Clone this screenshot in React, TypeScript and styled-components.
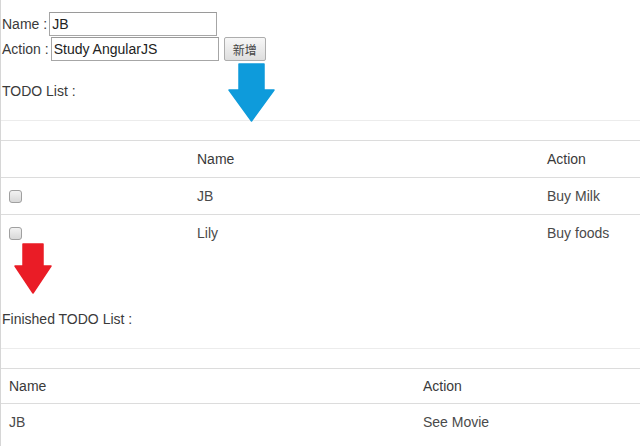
import React from "react";
import styled, { createGlobalStyle } from "styled-components";

const Global = createGlobalStyle`
  html, body { margin: 0; padding: 0; background: #fff; }
  body { font-family: "Liberation Sans", Arial, sans-serif; font-size: 14px; color: #333; }
`;

const Page = styled.div`
  position: relative;
  min-height: 446px;
  box-sizing: border-box;
  border-left: 1px solid #d6d6d6;
  padding-top: 12px;
  overflow: hidden;
`;

const Form = styled.div`
  display: flex;
  flex-direction: column;
  gap: 1px;
  padding-left: 1px;
`;

const FormRow = styled.div`
  display: flex;
  align-items: center;
  height: 24px;
`;

const Label = styled.span`
  font-size: 14px;
  color: #3a3a3a;
  white-space: pre;
`;

const TextInput = styled.input`
  box-sizing: border-box;
  width: 168px;
  height: 24px;
  margin: 0 0 0 2px;
  padding: 0 2px;
  border: 1px solid #a6a6a6;
  border-top-color: #9a9a9a;
  font-family: "Liberation Sans", Arial, sans-serif;
  font-size: 14px;
  color: #222;
  outline: none;
  background: #fff;
`;

const AddButton = styled.button`
  box-sizing: border-box;
  margin-left: 5px;
  width: 42px;
  height: 24px;
  padding: 0;
  border: 1px solid #adadad;
  border-radius: 2px;
  background: linear-gradient(#f7f7f7, #dedede);
  font-family: "Noto Sans CJK TC", "Noto Sans CJK SC", sans-serif;
  font-size: 12px;
  color: #444;
`;

const Title = styled.div<{ $top: number }>`
  margin-top: ${(p) => p.$top}px;
  margin-bottom: 19px;
  padding-left: 1px;
  line-height: 20px;
  font-size: 14px;
  color: #3a3a3a;
`;

const Table = styled.table`
  width: 100%;
  border-collapse: collapse;
  table-layout: fixed;
`;

const Spacer = styled.td`
  height: 19px;
  padding: 0;
  border-top: 1px solid #ececec;
`;

const Cell = styled.td<{ $pad?: number }>`
  padding: ${(p) => p.$pad ?? 8}px 8px;
  line-height: 20px;
  border-top: 1px solid #dcdcdc;
  text-align: left;
  vertical-align: middle;
  font-size: 14px;
  font-weight: normal;
  color: #4a4a4a;
`;

const Head = styled(Cell).attrs({ as: "th" })`
  color: #3a3a3a;
`;

const Check = styled.input`
  appearance: none;
  display: block;
  box-sizing: border-box;
  width: 13px;
  height: 13px;
  margin: 0;
  border: 1px solid #a0a0a0;
  border-radius: 3px;
  background: linear-gradient(#f2f2f2, #d8d8d8);
`;

const Arrow = styled.svg<{ $x: number; $y: number }>`
  position: absolute;
  left: ${(p) => p.$x}px;
  top: ${(p) => p.$y}px;
  overflow: visible;
`;

const todos = [
  { name: "JB", action: "Buy Milk" },
  { name: "Lily", action: "Buy foods" },
];

const finished = [{ name: "JB", action: "See Movie" }];

export default function App() {
  return (
    <>
      <Global />
      <Page>
        <Form>
          <FormRow>
            <Label>Name :</Label>
            <TextInput defaultValue="JB" />
          </FormRow>
          <FormRow>
            <Label>Action :</Label>
            <TextInput defaultValue="Study AngularJS" />
            <AddButton>新增</AddButton>
          </FormRow>
        </Form>

        <Title $top={20}>TODO List :</Title>
        <Table>
          <colgroup>
            <col style={{ width: 188 }} />
            <col style={{ width: 350 }} />
            <col />
          </colgroup>
          <thead>
            <tr>
              <Spacer colSpan={3} />
            </tr>
            <tr>
              <Head />
              <Head>Name</Head>
              <Head>Action</Head>
            </tr>
          </thead>
          <tbody>
            {todos.map((t) => (
              <tr key={t.name}>
                <Cell>
                  <Check type="checkbox" />
                </Cell>
                <Cell>{t.name}</Cell>
                <Cell>{t.action}</Cell>
              </tr>
            ))}
          </tbody>
        </Table>

        <Title $top={58}>Finished TODO List :</Title>
        <Table>
          <colgroup>
            <col style={{ width: 414 }} />
            <col />
          </colgroup>
          <thead>
            <tr>
              <Spacer colSpan={2} />
            </tr>
            <tr>
              <Head $pad={7}>Name</Head>
              <Head $pad={7}>Action</Head>
            </tr>
          </thead>
          <tbody>
            {finished.map((t) => (
              <tr key={t.name}>
                <Cell>{t.name}</Cell>
                <Cell>{t.action}</Cell>
              </tr>
            ))}
          </tbody>
        </Table>

        <Arrow $x={228} $y={64} width="45" height="57" viewBox="0 0 45 57">
          <polygon
            points="10,0 35,0 35,26 45,26 22.5,57 0,26 10,26"
            fill="#0e9bdb"
            stroke="#0e9bdb"
            strokeWidth="1.5"
            strokeLinejoin="round"
          />
        </Arrow>
        <Arrow $x={14} $y={244} width="36" height="49" viewBox="0 0 36 49">
          <polygon
            points="8,0 28,0 28,22 36,22 18,49 0,22 8,22"
            fill="#ea1c26"
            stroke="#ea1c26"
            strokeWidth="1.5"
            strokeLinejoin="round"
          />
        </Arrow>
      </Page>
    </>
  );
}
